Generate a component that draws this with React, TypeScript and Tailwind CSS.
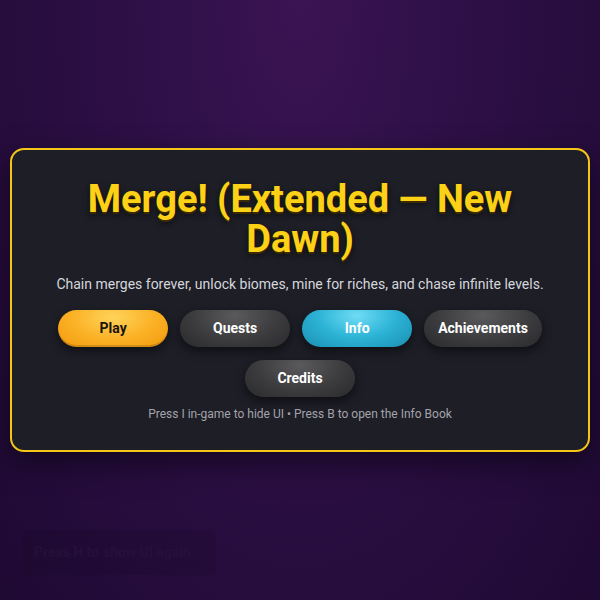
import React from "react";

const base =
  "min-w-[110px] h-[37px] px-[14px] rounded-full text-[14px] font-bold flex items-center justify-center";

export default function App() {
  return (
    <div
      className="relative w-full h-[600px] overflow-hidden flex items-center justify-center bg-[radial-gradient(ellipse_at_50%_0%,#3b1452_0%,#2f1048_35%,#250c3c_75%,#1f0a33_100%)]"
      style={{ fontFamily: "Roboto, 'Noto Sans', sans-serif" }}
    >
      <div className="w-[580px] rounded-[14px] border-2 border-[#f5c518] bg-[#1d1e26] px-7 pt-[29px] pb-[28px] flex flex-col items-center shadow-[0_10px_30px_rgba(0,0,0,0.5)]">
        <h1 className="text-[38px] leading-[40px] font-bold text-[#fcd116] text-center w-[460px] [text-shadow:0_2px_0_#3a2a00,0_3px_6px_rgba(0,0,0,0.6)]">
          Merge! (Extended — New Dawn)
        </h1>
        <p className="mt-[15px] text-[14px] leading-[20px] text-[#d6d6dc]">
          Chain merges forever, unlock biomes, mine for riches, and chase infinite levels.
        </p>
        <div className="mt-[16px] flex flex-wrap justify-center gap-x-[12px] gap-y-[13px] w-[500px]">
          <button className={`${base} text-[#1a1408] bg-[radial-gradient(ellipse_at_50%_20%,#ffd35a_0%,#fbb024_55%,#f29a0c_100%)] shadow-[0_4px_10px_rgba(0,0,0,0.45),inset_0_-2px_0_rgba(0,0,0,0.15)]`}>
            Play
          </button>
          <button className={`${base} text-white bg-[radial-gradient(ellipse_at_50%_15%,#5a5a5c_0%,#3c3c3e_55%,#2a2a2c_100%)] shadow-[0_4px_10px_rgba(0,0,0,0.5)]`}>
            Quests
          </button>
          <button className={`${base} text-white bg-[radial-gradient(ellipse_at_50%_15%,#6fdcf5_0%,#2cb3d6_50%,#1a8fb0_100%)] shadow-[0_4px_10px_rgba(0,0,0,0.5)]`}>
            Info
          </button>
          <button className={`${base} text-white bg-[radial-gradient(ellipse_at_50%_15%,#5a5a5c_0%,#3c3c3e_55%,#2a2a2c_100%)] shadow-[0_4px_10px_rgba(0,0,0,0.5)]`}>
            Achievements
          </button>
          <button className={`${base} text-white bg-[radial-gradient(ellipse_at_50%_15%,#5a5a5c_0%,#3c3c3e_55%,#2a2a2c_100%)] shadow-[0_4px_10px_rgba(0,0,0,0.5)]`}>
            Credits
          </button>
        </div>
        <p className="mt-[9px] text-[12px] leading-[16px] text-[#a3a3ab]">
          Press I in-game to hide UI • Press B to open the Info Book
        </p>
      </div>
      <div className="absolute left-[22px] top-[530px] w-[194px] h-[45px] rounded-md bg-[rgba(15,5,25,0.12)] flex items-center px-3">
        <span className="text-[14px] font-bold text-[rgba(45,28,65,0.35)]">Press H to show UI again</span>
      </div>
    </div>
  );
}
